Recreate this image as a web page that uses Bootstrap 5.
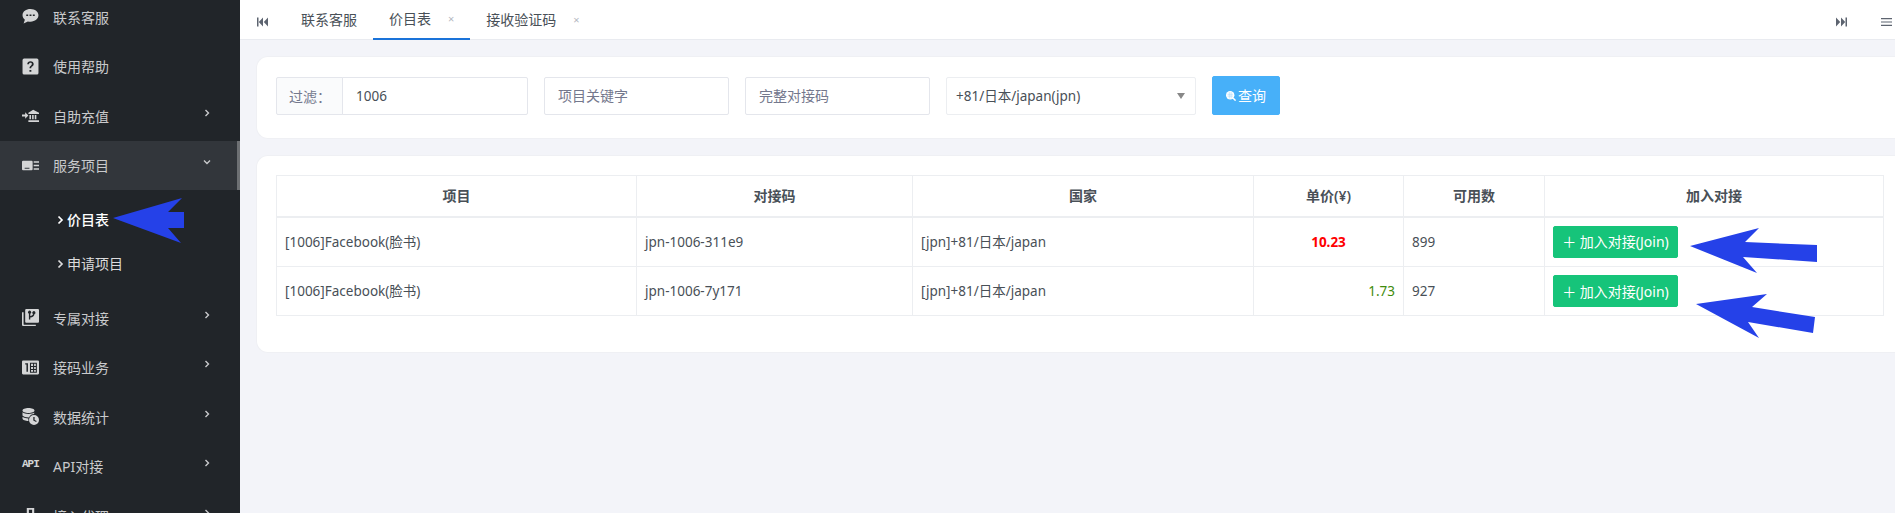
<!DOCTYPE html>
<html lang="zh">
<head>
<meta charset="utf-8">
<title>价目表</title>
<link href="https://cdn.jsdelivr.net/npm/bootstrap@5.3.0/dist/css/bootstrap.min.css" rel="stylesheet">
<style>
html,body{height:513px;overflow:hidden}
body{font-family:"Noto Sans","Noto Sans CJK SC",sans-serif;font-size:13.500px;color:#495057;background:#f3f4f9;position:relative}
.app-shell{height:513px}
.side-panel{width:240px;flex:none;background:#212529;color:#c9cacc;overflow:hidden;height:513px}
.side-scroll{margin-top:-8px}
.side-item{height:49.500px;padding-left:22px;padding-right:29px;font-size:14px}
.side-item svg{width:17px;height:17px;flex:none;fill:#d4d5d6}
.side-label{margin-left:14px;flex:1;line-height:1;padding-top:2px}
.side-on{background:#32363b;border-right:3px solid #6d7073;padding-right:26px}
.side-item svg.side-chev{width:8px;height:8px;fill:none;stroke:#c9cacc;stroke-width:1.400;margin-top:-6px}
.side-subs{padding:7px 0 7px}
.side-sub{height:45px;padding-left:57px;font-size:14px;color:#dcdcdd;gap:3px;line-height:1}
.side-sub svg{width:7px;height:10px;fill:none;stroke:currentColor;stroke-width:1.700}
.side-sub-on{color:#fff;font-weight:500}
.side-sub-lift{margin-top:-1px}
.api-tag{width:17px;flex:none;font:700 11px/1 "Liberation Mono",monospace;letter-spacing:-1px;color:#d4d5d6;margin-top:-3px}
.main-col{flex:1;min-width:0}
.tab-strip{height:40px;background:#fff;border-bottom:1px solid #e9ebf0;font-size:14px;color:#495057}
.tab-ctrl{width:11px;height:12px;fill:#5d6470}
.tab-first{margin-left:17px}
.tab-cell{height:39px;padding:0 16px;line-height:1}
.tab-cell-lead{margin-left:17px}
.tab-cell-on{border-bottom:2px solid #1a73d9;height:40px;padding-bottom:1px}
.tab-x{font-size:11px;color:#b4b8bf;margin-left:17px}
.tab-right{margin-left:auto;padding-right:3px;gap:34px}
.pane-box{background:#fff;border-radius:12px 0 0 12px;margin-left:16px;margin-right:-8px;border:1px solid #eff0f4;border-right:0}
.filter-box{margin-top:16px;height:83px;padding:20px 20px 0 19px;gap:16px}
.filter-group{width:252px;flex:none;height:38px}
.filter-group .input-group-text{width:67px;background:#fafbfc;color:#74788d;font-size:14px;padding:0 12px;border-color:#e4e6ec;border-radius:2px 0 0 2px}
.filter-input{height:38px;font-size:13.500px;color:#495057;border-color:#e4e6ec;border-radius:2px;padding:0 13px}
.filter-input::placeholder{color:#74788d;font-size:14px}
.filter-wide{width:185px;flex:none}
.filter-select{width:250px;flex:none;height:38px;font-size:13.500px;color:#495057;border-color:#eceef1;border-radius:2px;padding:0 9px;background-image:none}
.select-wrap{position:relative;flex:none;width:250px}
.select-caret{position:absolute;right:11px;top:16px;width:0;height:0;border-left:4px solid transparent;border-right:4px solid transparent;border-top:6px solid #888}
.search-btn{width:68px;height:39px;margin-top:-1px;background:#47b0f9;border-color:#47b0f9;color:#fff;font-size:14px;border-radius:2px;padding:0;gap:2px}
.search-btn svg{width:10px;height:10px}
.list-box{margin-top:16px;height:198px;padding:19px 19px 0 19px}
.price-table{width:1607px;table-layout:fixed;margin:0;color:#495057;border-color:#eceef1;font-size:13.500px}
.price-table th{height:41px;padding:0 9px;font-size:14px;font-weight:600;text-align:center;vertical-align:middle;border-bottom-width:2px!important;color:#495057}
.price-table td{height:49px;padding:0 8px;vertical-align:middle}
.price-table tbody tr:first-child td{height:50px}
.col-a{width:360px}.col-b{width:276px}.col-c{width:341px}.col-d{width:150px}.col-e{width:141px}.col-f{width:339px}
.price-high{color:#f00;font-weight:700}
.price-low{color:#3f8c0b}
.join-btn{width:125px;height:32px;padding:0;background:#16c47a;border-color:#16c47a;color:#fff;font-size:14px;border-radius:2px}
.join-btn:hover{background:#16c47a;border-color:#16c47a}
.note-arrow{position:absolute;left:0;top:0;width:1895px;height:513px;pointer-events:none}
</style>
</head>
<body>
<div class="app-shell d-flex">
  <aside class="side-panel">
    <div class="side-scroll">
      <div class="side-item d-flex align-items-center"><svg viewBox="0 0 16 16"><path fill-rule="evenodd" d="M8 1C3.800 1 .5 3.400.5 6.800c0 1.700.9 3.100 2.200 4.200L1.500 14.500l4-1.800c.8.200 1.600.2 2.500.2 4.200 0 7.500-2.700 7.500-6S12.200 1 8 1zM4 6.200h1.800v1.400H4zm3.100 0h1.800v1.400H7.100zm3.100 0H12v1.400h-1.800z"/></svg><span class="side-label">联系客服</span></div>
      <div class="side-item d-flex align-items-center"><svg viewBox="0 0 16 16"><path fill-rule="evenodd" d="M2 .5h12A1.500 1.500 0 0 1 15.500 2v12a1.500 1.500 0 0 1-1.500 1.500H2A1.500 1.500 0 0 1 .5 14V2A1.500 1.500 0 0 1 2 .5zM8 3C6.200 3 5 4.100 4.900 5.800h1.700C6.700 5 7.200 4.500 8 4.500s1.300.5 1.300 1.200c0 .6-.3 1-1 1.500-.9.600-1.200 1.200-1.200 2.200v.3h1.600v-.2c0-.7.200-1 .9-1.500.9-.6 1.400-1.300 1.400-2.400C11 4.100 9.800 3 8 3zM7 11.200v1.700h1.800v-1.700z"/></svg><span class="side-label">使用帮助</span></div>
      <div class="side-item d-flex align-items-center"><svg viewBox="0 0 16 16"><path d="M10.500 2.500 16 5.500v1H6v-1zM7 7.500h1.500v4H7zm2.500 0H11v4H9.500zm2.500 0h1.500v4H12zM6 12.500h10V14H6zM0 7h3V5l3 3-3 3V9H0z"/></svg><span class="side-label">自助充值</span><svg class="side-chev" viewBox="0 0 8 8"><path d="M2.500 1 5.500 4 2.500 7"/></svg></div>
      <div class="side-item side-on d-flex align-items-center"><svg viewBox="0 0 16 16"><path fill-rule="evenodd" d="M1 3.500h8a1 1 0 0 1 1 1v7a1 1 0 0 1-1 1H1a1 1 0 0 1-1-1v-7a1 1 0 0 1 1-1zm1.500 6.500v1H7v-1zM11 4h5v1.500h-5zm0 3.200h5v1.500h-5zm0 3.300h5V12h-5z"/></svg><span class="side-label">服务项目</span><svg class="side-chev" viewBox="0 0 8 8"><path d="M1 2.500 4 5.500 7 2.500"/></svg></div>
      <div class="side-subs">
        <div class="side-sub side-sub-on d-flex align-items-center"><svg viewBox="0 0 7 10"><path d="M1.500 1.500 5 5 1.500 8.500"/></svg><span>价目表</span></div>
        <div class="side-sub side-sub-lift d-flex align-items-center"><svg viewBox="0 0 7 10"><path d="M1.500 1.500 5 5 1.500 8.500"/></svg><span>申请项目</span></div>
      </div>
      <div class="side-item d-flex align-items-center"><svg viewBox="0 0 16 16"><path fill-rule="evenodd" d="M4 0h11a1 1 0 0 1 1 1v11a1 1 0 0 1-1 1H4a1 1 0 0 1-1-1V1a1 1 0 0 1 1-1zm2.500 2.500v7.300h1.300V8c2.400-.2 3.700-1.500 3.900-3.100a1.500 1.500 0 1 0-1.300-.1C10.200 5.800 9.300 6.600 7.800 6.700V4.400a1.500 1.500 0 1 0-1.300 0zM0 3h1.500v11a.8.8 0 0 0 .8.800H13V16H1a1 1 0 0 1-1-1z"/></svg><span class="side-label">专属对接</span><svg class="side-chev" viewBox="0 0 8 8"><path d="M2.500 1 5.500 4 2.500 7"/></svg></div>
      <div class="side-item d-flex align-items-center"><svg viewBox="0 0 16 16"><path fill-rule="evenodd" d="M1 1.500h14a1 1 0 0 1 1 1v11a1 1 0 0 1-1 1H1a1 1 0 0 1-1-1v-11a1 1 0 0 1 1-1zM3 4v1.200h1.200V12h1.400V4zM7.500 3.500V13H14V3.500zm1 1h1.900v2H8.500zm2.900 0H13v2h-1.600zM8.500 7.500h1.900v1.800H8.500zm2.900 0H13v1.800h-1.600zM8.500 10.300h1.900V12H8.500zm2.900 0H13V12h-1.600z"/></svg><span class="side-label">接码业务</span><svg class="side-chev" viewBox="0 0 8 8"><path d="M2.500 1 5.500 4 2.500 7"/></svg></div>
      <div class="side-item d-flex align-items-center"><svg viewBox="0 0 17 17"><path fill-rule="evenodd" d="M6.500 0C9.800 0 12.500 1 12.500 2.500S9.800 5 6.500 5 .5 4 .5 2.500 3.200 0 6.500 0zM.5 4.300C1.800 5.500 4 6 6.500 6c2.300 0 4.400-.4 5.700-1.400v1.500A6 6 0 0 0 7 9.400C4 9.400 1.400 8.700.5 7.500zm0 4.500C1.800 9.900 4.100 10.500 6.400 10.500a6 6 0 0 0 .1 2.500C3.500 13 .5 12 .5 10.500zM12 7a5 5 0 1 1 0 10 5 5 0 0 1 0-10zm-.7 2v3.600l2.800 1.500.6-1-2.100-1.200V9z"/></svg><span class="side-label">数据统计</span><svg class="side-chev" viewBox="0 0 8 8"><path d="M2.500 1 5.500 4 2.500 7"/></svg></div>
      <div class="side-item d-flex align-items-center"><span class="api-tag">API</span><span class="side-label">API对接</span><svg class="side-chev" viewBox="0 0 8 8"><path d="M2.500 1 5.500 4 2.500 7"/></svg></div>
      <div class="side-item d-flex align-items-center"><svg viewBox="0 0 16 16"><path fill-rule="evenodd" d="M4.500 1h7v6.500h-2.500v4h4V15H3v-3.500h4v-4H4.500zm2 1.700v3h3v-3z"/></svg><span class="side-label">接入代理</span><svg class="side-chev" viewBox="0 0 8 8"><path d="M2.500 1 5.500 4 2.500 7"/></svg></div>
    </div>
  </aside>
  <main class="main-col">
    <div class="tab-strip d-flex align-items-start">
      <svg class="tab-ctrl tab-first mt-3" viewBox="0 0 11 9"><path d="M0 0h1.500v9H0zM6 0v9L1.800 4.500zM11 0v9L6.800 4.500z"/></svg>
      <div class="tab-cell tab-cell-lead d-flex align-items-center">联系客服</div>
      <div class="tab-cell tab-cell-on d-flex align-items-center">价目表<span class="tab-x">×</span></div>
      <div class="tab-cell d-flex align-items-center">接收验证码<span class="tab-x">×</span></div>
      <div class="tab-right d-flex align-items-center mt-3">
        <svg class="tab-ctrl" viewBox="0 0 11 9"><path d="M11 0H9.500v9H11zM5 0v9l4.200-4.500zM0 0v9l4.200-4.500z"/></svg>
        <svg class="tab-ctrl" viewBox="0 0 11 9"><path d="M0 .5h11v1.200H0zM0 3.900h11v1.200H0zM0 7.300h11v1.200H0z"/></svg>
      </div>
    </div>
    <section class="pane-box filter-box d-flex align-items-start">
      <div class="input-group filter-group">
        <span class="input-group-text">过滤：</span>
        <input class="form-control filter-input" type="text" value="1006">
      </div>
      <input class="form-control filter-input filter-wide" type="text" placeholder="项目关键字">
      <input class="form-control filter-input filter-wide" type="text" placeholder="完整对接码">
      <div class="select-wrap">
        <select class="form-select filter-select"><option>+81/日本/japan(jpn)</option></select>
        <span class="select-caret"></span>
      </div>
      <button class="btn btn-primary search-btn d-flex align-items-center justify-content-center" type="button"><svg viewBox="0 0 10 10"><circle cx="4.200" cy="4.200" r="4.200" fill="#fff"/><path d="M7 7l2.600 2.600" stroke="#fff" stroke-width="1.500"/><path d="M1.500 3.300h5.400M1.500 5.100h5.400M3.300 1v6.400M5.100 1v6.400" stroke="#a6d9fc" stroke-width=".6"/></svg>查询</button>
    </section>
    <section class="pane-box list-box">
      <table class="table table-bordered price-table">
        <colgroup><col class="col-a"><col class="col-b"><col class="col-c"><col class="col-d"><col class="col-e"><col class="col-f"></colgroup>
        <thead><tr><th>项目</th><th>对接码</th><th>国家</th><th>单价(¥)</th><th>可用数</th><th>加入对接</th></tr></thead>
        <tbody>
          <tr><td>[1006]Facebook(脸书)</td><td>jpn-1006-311e9</td><td>[jpn]+81/日本/japan</td><td class="text-center price-high">10.23</td><td>899</td><td><button class="btn btn-success join-btn" type="button">＋ 加入对接(Join)</button></td></tr>
          <tr><td>[1006]Facebook(脸书)</td><td>jpn-1006-7y171</td><td>[jpn]+81/日本/japan</td><td class="text-end price-low">1.73</td><td>927</td><td><button class="btn btn-success join-btn" type="button">＋ 加入对接(Join)</button></td></tr>
        </tbody>
      </table>
    </section>
  </main>
</div>
<svg class="note-arrow" viewBox="0 0 1895 513" fill="#2541e8">
  <polygon points="113,218 182,198 168,212 184,212 184,228 168,228 181,243"/>
  <polygon points="1690,246 1759,228 1745,242 1817,245 1817,262 1743,257 1757,273"/>
  <polygon points="1696,304 1767,294 1752,307 1815,317 1813,333 1748,322 1759,338"/>
</svg>
</body>
</html>
